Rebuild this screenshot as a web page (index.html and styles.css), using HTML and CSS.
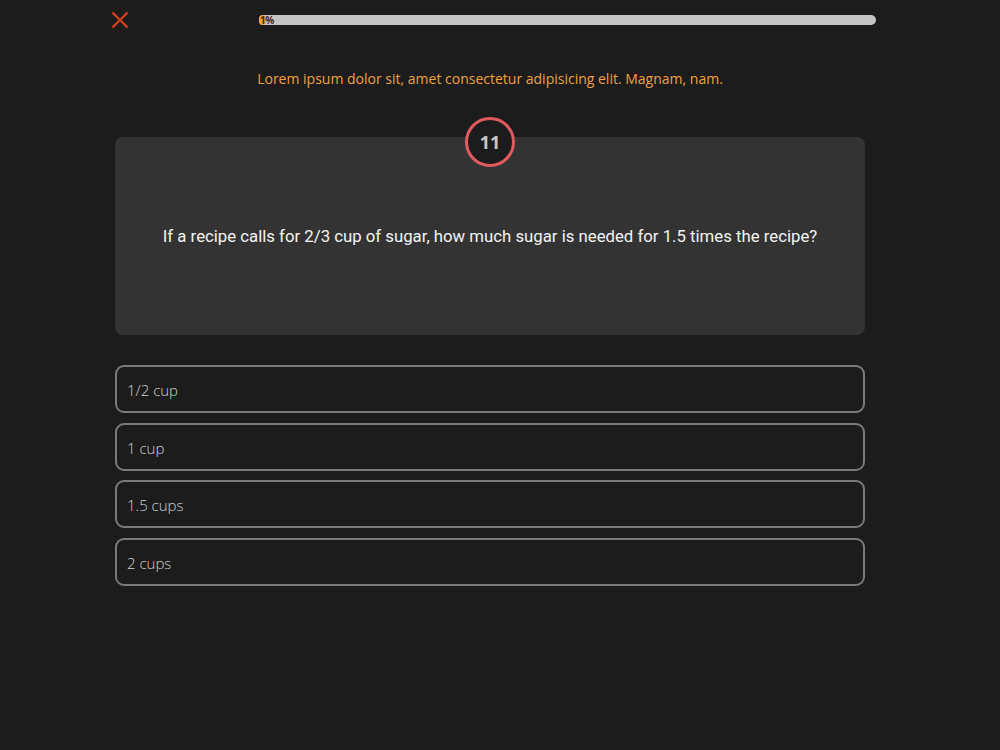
FILE: index.html
```html
<!DOCTYPE html>
<html lang="en">
<head>
<meta charset="utf-8">
<title>Quiz</title>
<link rel="stylesheet" href="styles.css">
</head>
<body>
  <header class="top">
    <button class="close" aria-label="Close">
      <svg viewBox="0 0 18 18" width="18" height="18">
        <path d="M1.5 1.5 L16.5 16.5 M16.5 1.5 L1.5 16.5" stroke="#e0401f" stroke-width="2.2" fill="none"/>
      </svg>
    </button>
    <div class="progress">
      <div class="progress-fill" style="width:1%"></div>
      <span class="progress-label">1%</span>
    </div>
  </header>

  <main class="quiz">
    <p class="subtitle">Lorem ipsum dolor sit, amet consectetur adipisicing elit. Magnam, nam.</p>

    <section class="question-card">
      <div class="badge">11</div>
      <p class="question">If a recipe calls for 2/3 cup of sugar, how much sugar is needed for 1.5 times the recipe?</p>
    </section>

    <ul class="options">
      <li class="option">1/2 cup</li>
      <li class="option">1 cup</li>
      <li class="option">1.5 cups</li>
      <li class="option">2 cups</li>
    </ul>
  </main>
</body>
</html>
```
FILE: styles.css
```css
html, body {
  margin: 0;
  padding: 0;
}

body {
  background: #1c1c1c;
  font-family: "Open Sans", "Noto Sans", sans-serif;
  color: #ddd;
  height: 750px;
}

.top {
  display: flex;
  align-items: center;
  padding: 11px 0 0 111px;
  height: 18px;
}

.close {
  width: 18px;
  height: 18px;
  padding: 0;
  border: 0;
  background: none;
  display: block;
  cursor: pointer;
}

.close svg {
  display: block;
}

.progress {
  position: relative;
  margin-left: 130px;
  width: 617px;
  height: 10px;
  background: #c4c4c4;
  border-radius: 5px;
}

.progress-fill {
  height: 100%;
  background: #f2a33a;
  border-radius: 5px;
  min-width: 7px;
}

.progress-label {
  position: absolute;
  left: 1px;
  top: -1px;
  font-family: "Open Sans", sans-serif;
  font-size: 10px;
  font-weight: 700;
  line-height: 12px;
  color: #3a2a10;
  letter-spacing: -0.5px;
  white-space: nowrap;
}

.quiz {
  width: 750px;
  margin-left: 115px;
}

.subtitle {
  margin: 40px 0 0;
  text-align: center;
  font-size: 14px;
  line-height: 19px;
  color: #f0a040;
}

.question-card {
  position: relative;
  margin-top: 49px;
  height: 198px;
  background: #333333;
  border-radius: 8px;
  display: flex;
  align-items: center;
  justify-content: center;
}

.badge {
  position: absolute;
  top: -20px;
  left: 50%;
  transform: translateX(-50%);
  width: 44px;
  height: 44px;
  border: 3px solid #e05a5e;
  border-radius: 50%;
  background: #1c1c1c;
  display: flex;
  align-items: center;
  justify-content: center;
  font-size: 18px;
  font-weight: 700;
  color: #c8c8c8;
}

.question {
  margin: 0;
  font-family: Roboto, "Liberation Sans", sans-serif;
  font-size: 16.75px;
  font-weight: 400;
  color: #f4f4f4;
  text-align: center;
}

.options {
  list-style: none;
  margin: 30px 0 0;
  padding: 0;
  display: flex;
  flex-direction: column;
  gap: 9.5px;
}

.option {
  box-sizing: border-box;
  height: 48px;
  border: 2px solid #7a7a7a;
  border-radius: 9px;
  padding: 2px 10px 0;
  display: flex;
  align-items: center;
  font-size: 15px;
  font-weight: 300;
  color: #d0d0d0;
}
```
